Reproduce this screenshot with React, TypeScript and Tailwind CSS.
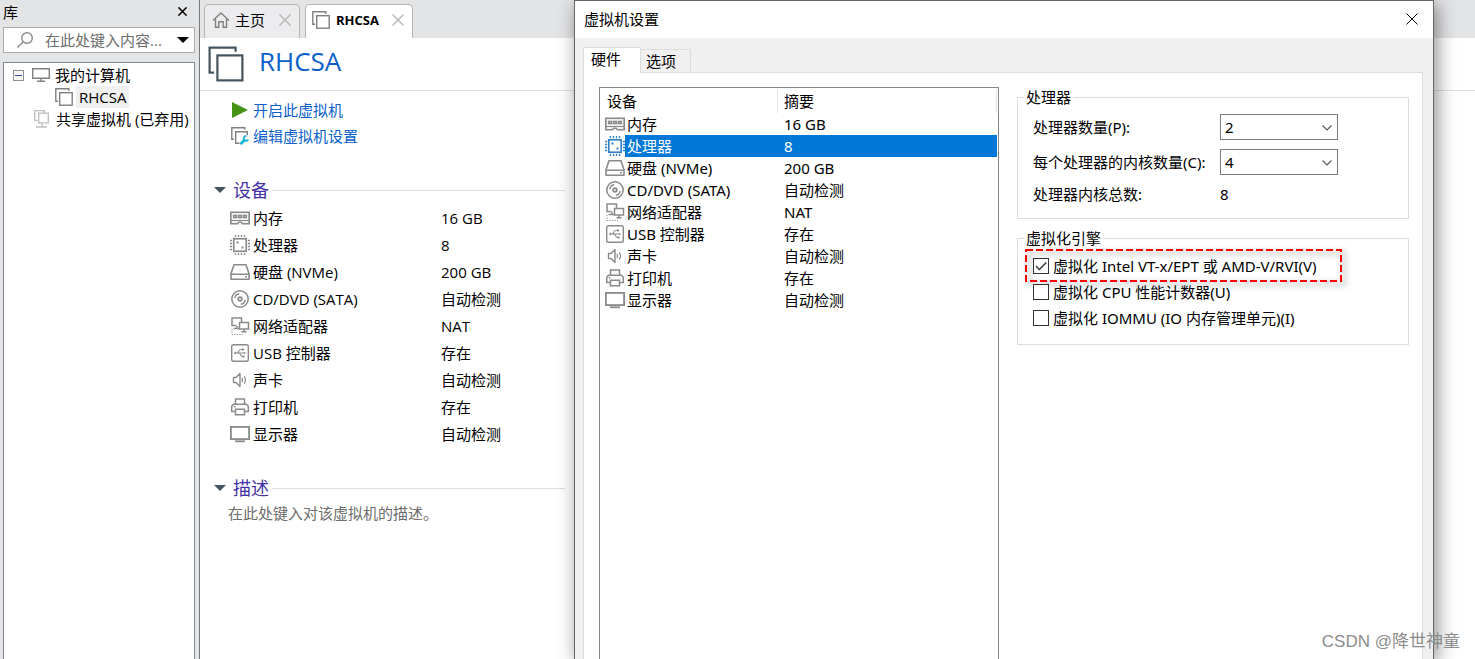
import { FC, ReactNode, useState } from "react";

type IconName =
  | "memory"
  | "cpu"
  | "disk"
  | "cd"
  | "network"
  | "usb"
  | "sound"
  | "printer"
  | "display";

interface Device {
  icon: IconName;
  name: string;
  summary: string;
}

const devices: Device[] = [
  { icon: "memory", name: "内存", summary: "16 GB" },
  { icon: "cpu", name: "处理器", summary: "8" },
  { icon: "disk", name: "硬盘 (NVMe)", summary: "200 GB" },
  { icon: "cd", name: "CD/DVD (SATA)", summary: "自动检测" },
  { icon: "network", name: "网络适配器", summary: "NAT" },
  { icon: "usb", name: "USB 控制器", summary: "存在" },
  { icon: "sound", name: "声卡", summary: "自动检测" },
  { icon: "printer", name: "打印机", summary: "存在" },
  { icon: "display", name: "显示器", summary: "自动检测" },
];

const iconShapes: Record<IconName, ReactNode> = {
  memory: (
    <>
      <path d="M.8 4.3h18.4v11.4h-6.7l-1.5-1.5H9l-1.5 1.5H.8z" fill="#f0f0f0" strokeWidth="1.6" />
      <path d="M1 12.5h18" strokeWidth="1" />
      <path d="M3.7 7.5h2.8v2H3.7zM8.6 7.5h2.8v2H8.6zM13.5 7.5h2.8v2h-2.8z" strokeWidth="1.5" />
    </>
  ),
  cpu: (
    <>
      <rect x="3.8" y="3.8" width="12.4" height="12.4" strokeWidth="1.6" />
      <path
        d="M5.5 0v2.2M8.5 0v2.2M11.5 0v2.2M14.5 0v2.2M5.5 17.8V20M8.5 17.8V20M11.5 17.8V20M14.5 17.8V20M0 5.5h2.2M0 8.5h2.2M0 11.5h2.2M0 14.5h2.2M17.8 5.5H20M17.8 8.5H20M17.8 11.5H20M17.8 14.5H20"
        strokeWidth="1.3"
      />
      <path d="M6.5 7.5h2M11.5 12.5h2" strokeWidth="2" />
    </>
  ),
  disk: (
    <>
      <path d="M4 2.8h12l3 9v5.4H1v-5.4z" strokeWidth="1.6" strokeLinejoin="round" />
      <path d="M1 12.3h18M15 14.8h2" strokeWidth="1.5" />
    </>
  ),
  cd: (
    <>
      <circle cx="10" cy="10" r="8.2" strokeWidth="1.5" />
      <circle cx="10" cy="10" r="1.8" strokeWidth="1.8" />
      <path d="M4.8 9.2a5.3 5.3 0 0 1 4.4-4.4M15.2 10.8a5.3 5.3 0 0 1-4.4 4.4" strokeWidth="1.4" />
    </>
  ),
  network: (
    <>
      <path d="M6.5 9.5H2V2h9.5v4M7 10v2.5M3.5 12.5h6" strokeWidth="1.5" />
      <rect x="9.5" y="6.5" width="9" height="6.5" strokeWidth="1.5" />
      <path d="M14 13v3M11.5 15.8h5" strokeWidth="1.5" />
      <path d="M2 13v5.5h11" strokeWidth="1" strokeDasharray="1.2 1.4" />
    </>
  ),
  usb: (
    <>
      <rect x="1.7" y="1.7" width="16.6" height="16.6" rx="1.8" strokeWidth="1.4" />
      <path d="M5 10h10M6.8 10c2 0 2-3.5 4-3.5h2M8.5 10c2 0 2 3.5 4 3.5h1" strokeWidth="1.1" />
      <path d="M3.5 10 6 8.5v3zM16 10l-2-1.3v2.6zM12 5.5h2v2h-2zM12.5 12.5h2v2h-2z" fill="currentColor" stroke="none" />
    </>
  ),
  sound: (
    <>
      <path d="M3.5 7.5H6l4-4v13l-4-4H3.5z" strokeWidth="1.4" strokeLinejoin="round" />
      <path d="M12 7.8q1 2.2 0 4.4M14.3 6.2q2.2 3.8 0 7.6" strokeWidth="1.2" />
    </>
  ),
  printer: (
    <>
      <path d="M5.5 7V2h9v5M5.5 14.5H1.7V9.2L3.5 7.3h13l1.8 1.9v5.3h-3.8" strokeWidth="1.5" />
      <path d="M5.5 12.2h9v5.5h-9zM3.8 9.8h1.6" strokeWidth="1.5" />
    </>
  ),
  display: (
    <>
      <rect x="0.9" y="2.9" width="18.2" height="12.2" strokeWidth="1.8" />
      <path d="M5 17.3h10" strokeWidth="1.8" />
    </>
  ),
};

const DeviceIcon: FC<{ name: IconName; active?: boolean }> = ({ name, active }) => (
  <svg
    viewBox="0 0 20 20"
    className={`h-5 w-5 shrink-0 ${active ? "text-[#2f7fc4]" : "text-[#8a8a8a]"}`}
    fill="none"
    stroke="currentColor"
    aria-hidden="true"
  >
    {iconShapes[name]}
  </svg>
);

// Two stacked squares, the symbol of a virtual machine
const VmIcon: FC<{ className: string; strokeWidth?: number }> = ({ className, strokeWidth = 1.4 }) => (
  <svg viewBox="0 0 18 18" className={className} fill="none" stroke="currentColor" strokeWidth={strokeWidth} aria-hidden="true">
    <path d="M3 13.3H.8V.8h13v2.1" />
    <rect x="4.7" y="4.7" width="12.5" height="12.5" />
  </svg>
);

const CloseIcon: FC<{ className: string }> = ({ className }) => (
  <svg viewBox="0 0 12 12" className={className} fill="none" stroke="currentColor" aria-hidden="true">
    <path d="M.5.5l11 11M11.5.5l-11 11" />
  </svg>
);

const MonitorIcon: FC = () => (
  <svg viewBox="0 0 18 16" className="h-4 w-[18px] shrink-0 text-[#808080]" fill="none" stroke="currentColor" strokeWidth="1.4" aria-hidden="true">
    <path d="M.7 1.7h16.6v9.6H.7zM9 11v3M5 14.3h8" />
  </svg>
);

const Library: FC = () => (
  <aside className="flex w-50 shrink-0 flex-col border-r border-[#77787a] bg-[#e3e4e6] pr-1 pl-[3px]">
    <div className="flex h-[27px] items-center justify-between pr-2 pb-1">
      <h2>库</h2>
      <button type="button" aria-label="关闭库">
        <CloseIcon className="h-[9px] w-[9px] stroke-2 text-black" />
      </button>
    </div>
    <div className="flex h-[26px] items-center border border-[#acacac] bg-white pr-[5px] pl-3">
      <svg viewBox="0 0 18 18" className="h-[18px] w-[18px] shrink-0 text-[#8a8a8a]" fill="none" stroke="currentColor" strokeWidth="1.4" aria-hidden="true">
        <circle cx="11" cy="7" r="5.3" />
        <path d="M7.2 10.8 1.5 16.5" />
      </svg>
      <input
        type="text"
        aria-label="搜索库"
        placeholder="在此处键入内容..."
        className="ml-[11px] h-5 w-0 flex-1 bg-transparent outline-none placeholder:text-[#6d6d6d]"
      />
      <button type="button" aria-label="搜索选项">
        <svg viewBox="0 0 12 6" className="h-[6px] w-3" aria-hidden="true">
          <path d="M0 0h12L6 6z" />
        </svg>
      </button>
    </div>
    <ul className="mt-[9px] flex-1 border border-b-0 border-[#828790] bg-white pt-px whitespace-nowrap">
      <li className="flex h-[22px] items-center pl-[9px]">
        <button type="button" aria-label="折叠" className="grid h-[11px] w-[11px] place-items-center border border-[#8e8f8f] bg-[#f6f6f6]">
          <span className="h-px w-[7px] bg-[#2c4f9e]" />
        </button>
        <span className="ml-2 flex items-center gap-[5px]">
          <MonitorIcon />
          我的计算机
        </span>
      </li>
      <li className="flex h-[22px] items-center pl-[51px]">
        <VmIcon className="h-[18px] w-[18px] text-[#808080]" />
        <span className="ml-[3px] bg-[#f0f0f0] px-[3px] leading-[22px]">RHCSA</span>
      </li>
      <li className="flex h-[22px] items-center gap-[7px] pl-[30px]">
        <svg viewBox="0 0 15 18" className="h-[18px] w-[15px] shrink-0 text-[#bdbdbd]" fill="none" stroke="currentColor" strokeWidth="1.3" aria-hidden="true">
          <path d="M3.5 10.3H.7V.7h9.6v2M4.7 3.2h9.6v9.6H4.7zM8 13v4M2 17h11" />
        </svg>
        共享虚拟机 (已弃用)
      </li>
    </ul>
  </aside>
);

const SectionTitle: FC<{ children: ReactNode }> = ({ children }) => (
  <h3 className="flex h-6 items-center text-[18px] text-[#4331a4]">
    <svg viewBox="0 0 12 6" className="mr-[7px] h-[6px] w-3 text-[#44545f]" aria-hidden="true">
      <path d="M0 0h12L6 6z" fill="currentColor" />
    </svg>
    {children}
    <span className="ml-[3px] h-px flex-1 bg-[#dedede]" />
  </h3>
);

const VmPage: FC = () => (
  <main className="min-w-0 flex-1">
    <div className="flex h-[38px] items-end gap-[5px] bg-[#e3e4e6] pl-1">
      <div className="flex h-[34px] w-24 items-center rounded-t-[5px] border border-b-0 border-[#b5b5b5] bg-[#ececee] pr-2 pb-[3px] pl-[7px]">
        <svg viewBox="0 0 18 18" className="h-[18px] w-[18px] text-[#808080]" fill="none" stroke="currentColor" strokeWidth="1.4" aria-hidden="true">
          <path d="M1 9.5 9 2l8 7.5M3.5 8v8.3h3.3v-5.5h4.4v5.5h3.3V8" />
        </svg>
        <button type="button" className="ml-[5px] flex-1 text-left">主页</button>
        <button type="button" aria-label="关闭主页">
          <CloseIcon className="h-3 w-3 stroke-[1.5] text-[#b9b9b9]" />
        </button>
      </div>
      <div className="flex h-[34px] w-27 items-center rounded-t-[5px] border border-b-0 border-[#b5b5b5] bg-white pr-2 pb-[3px] pl-[6px]">
        <VmIcon className="h-[18px] w-[18px] text-[#808080]" />
        <button type="button" className="ml-1.5 flex-1 text-left text-[13px] font-bold">RHCSA</button>
        <button type="button" aria-label="关闭 RHCSA">
          <CloseIcon className="h-3 w-3 stroke-[1.5] text-[#b9b9b9]" />
        </button>
      </div>
    </div>
    <header className="flex h-[53px] items-center border-b border-[#e0e0e0] pl-2">
      <VmIcon className="h-9 w-9 text-[#44545f]" strokeWidth={1.1} />
      <h1 className="ml-[15px] pb-[6px] text-[26px] leading-8 text-[#0a5fc9]">RHCSA</h1>
    </header>

    <div className="w-[365px] pt-[6px]">
      <div className="flex flex-col items-start pl-[31px] text-[#0a5fc9]">
        <button type="button" className="flex h-[26px] items-center gap-1">
          <svg viewBox="0 0 18 18" className="h-[18px] w-[18px]" aria-hidden="true">
            <path d="M1 1l16 8-16 8z" fill="#479317" />
          </svg>
          开启此虚拟机
        </button>
        <button type="button" className="flex h-[26px] items-center gap-1">
          <svg viewBox="0 0 18 18" className="h-[18px] w-[18px] text-[#808080]" fill="none" stroke="currentColor" strokeWidth="1.4" aria-hidden="true">
            <path d="M3 12.3H.8V.8h13v2M8.5 16.3H4.7V4.7h11.6v3.5" />
            <path d="M9.5 17.2 14 12.5" stroke="#14b0dc" strokeWidth="2.6" />
            <path d="M15.3 9a2.4 2.4 0 1 0 2 3.4" stroke="#14b0dc" strokeWidth="1.8" />
          </svg>
          编辑虚拟机设置
        </button>
      </div>

      <section className="mt-[29px] pl-[14px]">
        <SectionTitle>设备</SectionTitle>
        <ul className="mt-[2px] pl-4">
          {devices.map((device) => (
            <li key={device.name} className="flex h-[27px] items-center">
              <DeviceIcon name={device.icon} />
              <span className="ml-[3px] w-47">{device.name}</span>
              <span>{device.summary}</span>
            </li>
          ))}
        </ul>
      </section>

      <section className="mt-[29px] pl-[14px]">
        <SectionTitle>描述</SectionTitle>
        <p className="mt-[3px] pl-[14px] text-[#6d6d6d]">在此处键入对该虚拟机的描述。</p>
      </section>
    </div>
  </main>
);

const DeviceTable: FC = () => {
  const [selected, setSelected] = useState("处理器");

  return (
    <div className="w-100 shrink-0 border border-b-0 border-[#828790] pt-px pr-px">
      <table className="w-full table-fixed border-separate border-spacing-0 text-left">
        <colgroup>
          <col className="w-[178px]" />
          <col />
        </colgroup>
        <thead>
          <tr className="h-6">
            <th className="border-r border-[#e2e2e2] p-0 pl-[7px] font-normal">设备</th>
            <th className="border-r border-[#e2e2e2] p-0 pl-[6px] font-normal">摘要</th>
          </tr>
        </thead>
        <tbody>
          {devices.map((device) => {
            const active = device.name === selected;
            return (
              <tr key={device.name} className="h-[22px] cursor-default" onClick={() => setSelected(device.name)}>
                <td className="p-0">
                  <div className="flex h-[22px] items-center pl-[5px]">
                    <DeviceIcon name={device.icon} active={active} />
                    <span className={`h-[22px] flex-1 pl-[2px] leading-[22px] ${active ? "bg-[#0078d7] text-white" : ""}`}>
                      {device.name}
                    </span>
                  </div>
                </td>
                <td className={`p-0 pl-[6px] leading-[22px] ${active ? "bg-[#0078d7] text-white" : ""}`}>
                  {device.summary}
                </td>
              </tr>
            );
          })}
        </tbody>
      </table>
    </div>
  );
};

const CountSelect: FC<{ id: string; value: string; onChange: (value: string) => void }> = ({ id, value, onChange }) => (
  <div className="relative h-[26px] w-[118px]">
    <select
      id={id}
      value={value}
      onChange={(e) => onChange(e.target.value)}
      className="h-full w-full appearance-none border border-[#7a7a7a] bg-white pb-px pl-1"
    >
      {["1", "2", "4", "8"].map((n) => (
        <option key={n}>{n}</option>
      ))}
    </select>
    <svg viewBox="0 0 10 6" className="pointer-events-none absolute top-[11px] right-[6px] h-[6px] w-[10px]" fill="none" stroke="#555" strokeWidth="1.1" aria-hidden="true">
      <path d="M.5.5 5 5 9.5.5" />
    </svg>
  </div>
);

const Option: FC<{ label: string; defaultChecked?: boolean }> = ({ label, defaultChecked }) => (
  <label className="flex h-[26px] items-center gap-[4px]">
    <span className="relative h-4 w-4">
      <input type="checkbox" defaultChecked={defaultChecked} className="peer block h-4 w-4 appearance-none border border-[#333] bg-white" />
      <svg viewBox="0 0 16 16" className="pointer-events-none absolute inset-0 hidden h-4 w-4 peer-checked:block" fill="none" stroke="#333" strokeWidth="1.4" aria-hidden="true">
        <path d="M3 8l3.3 3.5L13.3 4.5" />
      </svg>
    </span>
    {label}
  </label>
);

const SettingsDialog: FC = () => {
  const [processors, setProcessors] = useState("2");
  const [cores, setCores] = useState("4");

  return (
    <div
      role="dialog"
      aria-label="虚拟机设置"
      className="absolute inset-y-0 right-[41px] left-[574px] flex flex-col border border-b-0 border-[#666] bg-[#f0f0f0] font-['Noto_Sans','Noto_Sans_CJK_SC',sans-serif] shadow-[3px_4px_18px_rgba(0,0,0,0.45)]"
    >
      <div className="flex h-[37px] shrink-0 items-center justify-between bg-white pr-[15px] pb-[2px] pl-[9px]">
        <h2>虚拟机设置</h2>
        <button type="button" aria-label="关闭">
          <CloseIcon className="h-3 w-3 text-black" />
        </button>
      </div>
      <div role="tablist" className="z-10 mt-[9px] ml-2 flex h-[25px] shrink-0 items-end">
        <button type="button" role="tab" aria-selected="true" className="-mb-px h-[26px] w-[58px] self-start border border-b-0 border-[#dcdcdc] bg-white pb-[3px] pl-[7px] text-left">
          硬件
        </button>
        <button type="button" role="tab" aria-selected="false" className="h-[23px] w-[50px] border border-b-0 border-l-0 border-[#dcdcdc] pl-[5px] text-left">
          选项
        </button>
      </div>
      <div className="mr-[10px] ml-2 flex min-h-0 flex-1 gap-[18px] border border-b-0 border-[#dcdcdc] bg-white pt-[14px] pr-[13px] pl-[15px]">
        <DeviceTable />
        <div className="flex min-w-0 flex-1 flex-col gap-[9px]">
          <fieldset className="border border-[#dcdcdc] px-[6px] pt-[7px] pb-[14px]">
            <legend className="px-[2px]">处理器</legend>
            <div className="grid grid-cols-[187px_1fr] items-center gap-y-[9px] pl-[9px]">
              <label htmlFor="processors">处理器数量(P):</label>
              <CountSelect id="processors" value={processors} onChange={setProcessors} />
              <label htmlFor="cores">每个处理器的内核数量(C):</label>
              <CountSelect id="cores" value={cores} onChange={setCores} />
              <span>处理器内核总数:</span>
              <output htmlFor="processors cores">{Number(processors) * Number(cores)}</output>
            </div>
          </fieldset>
          <fieldset className="border border-[#dcdcdc] px-[6px] pt-[5px] pb-[13px]">
            <legend className="px-[2px]">虚拟化引擎</legend>
            <div className="pl-[9px]">
              <div className="relative">
                <Option label="虚拟化 Intel VT-x/EPT 或 AMD-V/RVI(V)" defaultChecked />
                {/* dashed marker around the option that has to be ticked */}
                <svg className="pointer-events-none absolute -top-1 -left-2 h-[33px] w-[317px] overflow-visible drop-shadow-[3px_3px_3px_rgba(0,0,0,0.5)]" fill="none" aria-hidden="true">
                  <rect x="1" y="1" width="315" height="31" stroke="#f00" strokeWidth="2" strokeDasharray="7 3" />
                </svg>
              </div>
              <Option label="虚拟化 CPU 性能计数器(U)" />
              <Option label="虚拟化 IOMMU (IO 内存管理单元)(I)" />
            </div>
          </fieldset>
        </div>
      </div>
    </div>
  );
};

const App: FC = () => (
  <div className="relative flex h-screen overflow-hidden bg-white font-['Open_Sans','Noto_Sans_CJK_SC',sans-serif] text-[15px] leading-5 text-black">
    <Library />
    <VmPage />
    <SettingsDialog />
    <p className="absolute right-[15px] bottom-[5px] font-['Liberation_Sans','Noto_Sans_CJK_SC',sans-serif] text-[17px] leading-6 text-[#8c8c8c]">
      CSDN @降世神童
    </p>
  </div>
);

export default App;
